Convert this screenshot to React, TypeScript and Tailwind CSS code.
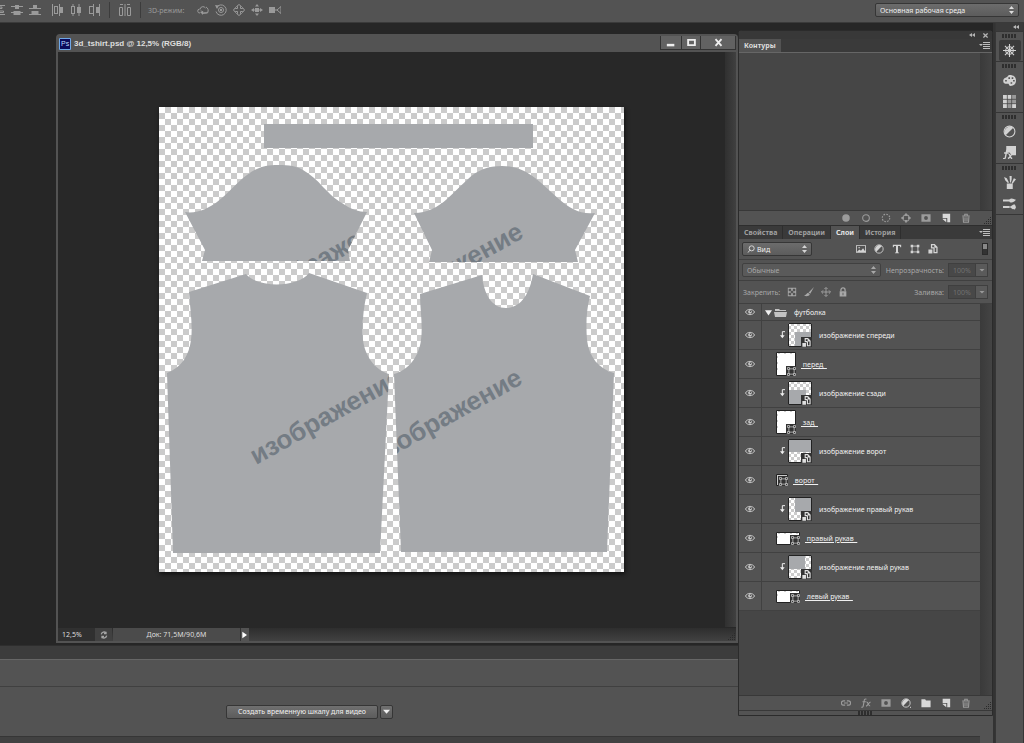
import type { ReactNode } from "react";

type IconProps = { children: ReactNode; className?: string; size?: number };

const Icon = ({ children, className = "", size = 12 }: IconProps) => (
  <svg
    width={size}
    height={size}
    viewBox="0 0 12 12"
    fill="none"
    stroke="currentColor"
    className={`shrink-0 ${className}`}
    aria-hidden="true"
  >
    {children}
  </svg>
);

const solid = { fill: "currentColor", stroke: "none" };

const trash = <path strokeWidth="1.300" d="M1.500 3.500h9M4.500 3V1.500h3V3M2.500 4.500l.5 6.500h6l.5-6.500M4.800 5v5M7.200 5v5" />;
const newSheet = <path {...solid} d="M2 1h9v10H7.500V6H2zM2 7h4.300v4L2 7.500z" />;
const mask = <path {...solid} fillRule="evenodd" d="M.5 1.500h11v9H.5zM6 3.700a2.300 2.300 0 1 0 0 4.600 2.300 2.300 0 0 0 0-4.600z" />;
const halfCircle = (
  <>
    <circle cx="6" cy="6" r="5" />
    <path {...solid} d="M9.500 2.500a5 5 0 0 0-7 7z" />
  </>
);
const frame = (
  <>
    <path d="M2.500 2.500h7v7h-7z" />
    <path {...solid} d="M.8.800h3v3h-3zM8.200.800h3v3h-3zM.8 8.200h3v3h-3zM8.200 8.200h3v3h-3z" />
  </>
);
const smart = <path {...solid} fillRule="evenodd" d="M3.500 0H8l3.500 3.500V11H6.500V5.500h-3zM5 1.500V4h3v5.500h2V4.500H7.500v-3zM.5 6.500h4.800v5H.5z" />;

const alignIcons = [
  <path d="M0 1.500h12M0 10.500h12M3 3h6v1.500H3zM1.500 7h9v1.500h-9z" />,
  <path {...solid} d="M0 2h4V1h4v1h4v1H8v2H4V3H0zM0 8h2.500V7h7v1H12v1H9.500v2h-7V9H0z" />,
  <path {...solid} d="M4 1h4v3h4v1H0V4h4zM2.500 7h7v3H12v1H0v-1h2.500z" />,
];
const distributeIcons = [
  <path {...solid} fillRule="evenodd" d="M0 0h1v12H0zM2 2h4v8H2zM3 3v6h2V3zM7 0h1v3h3v6H8v3H7z" />,
  <path {...solid} fillRule="evenodd" d="M2.500 0h1v2H5v8H3.500v2h-1v-2H1V2h1.500zM2 3v6h2V3zM8.500 0h1v3H11v6H9.500v3h-1V9H7V3h1.500z" />,
  <path {...solid} fillRule="evenodd" d="M5 0h1v12H5v-2H1V2h4zM2 3v6h3V3zM11 0h1v12h-1V9H8V3h3z" />,
];
const modeIcons = [
  <>
    <path d="M3 5.500a3 3 0 0 1 5.500-1.500M3 9a2 2 0 0 1-.5-4M4 6.500c2 2.500 5 2.500 6.500 1.500M9 3c2 1 3 3.500 1.500 6L5 9.500" />
    <path {...solid} d="M3 8l3-1v4z" />
  </>,
  <>
    <path d="M1.500 3.500a5.200 5.200 0 1 1-.5 4" />
    <circle cx="6" cy="6" r="2.500" />
    <path {...solid} d="M0 1l4 .5L2 5zM5 5h2v2H5z" />
  </>,
  <path d="M4.500 4.500V2.500H3.500L6 .5l2.500 2h-1v2h2v-1l2 2.500-2 2.500v-1h-2v2h1L6 11.500l-2.500-2h1v-2h-2v1L.5 6l2-2.500v1z" />,
  <>
    <path {...solid} d="M6 0l2 2.500H4zM6 12l2-2.500H4zM0 6l3-2v4zM12 6L9 4v4z" />
    <path {...solid} d="M4 4h4v4H4z" />
    <path d="M2 6h8" />
  </>,
  <>
    <path {...solid} d="M0 3h6v6H0z" />
    <path d="M12 2.500L8 6l4 3.500zM6 6h2" />
  </>,
];

const Arrows = () => (
  <svg width="5" height="8" viewBox="0 0 5 8" className="pointer-events-none absolute right-1 top-1/2 -translate-y-1/2" aria-hidden="true">
    <path fill="currentColor" d="M0 3L2.500 0 5 3zM0 5h5L2.500 8z" />
  </svg>
);

const Grip = () => (
  <svg width="15" height="4" viewBox="0 0 15 4" className="text-[#2e2e2e]" aria-hidden="true">
    <path stroke="currentColor" strokeDasharray="2 1" strokeWidth="4" d="M0 2h15" />
  </svg>
);

const DoubleArrow = () => (
  <svg width="6" height="4" viewBox="0 0 6 4" aria-hidden="true">
    <path fill="currentColor" d="M3 0v4L0 2zM6 0v4L3 2z" />
  </svg>
);

const PanelMenu = () => (
  <button type="button" aria-label="Меню панели" className="ml-auto mr-0.5 text-[#bdbdbd]">
    <svg width="11" height="7" viewBox="0 0 11 7" aria-hidden="true">
      <path fill="currentColor" d="M0 2h4L2 4zM4 0h7v1H4zM4 2h7v1H4zM4 4h7v1H4zM4 6h7v1H4z" />
    </svg>
  </button>
);

const Corner = () => (
  <svg width="8" height="8" viewBox="0 0 8 8" className="ml-auto self-end text-[#2b2b2b]" aria-hidden="true">
    <path fill="currentColor" d="M6 0h1v1H6zM4 2h1v1H4zM6 2h1v1H6zM2 4h1v1H2zM4 4h1v1H4zM6 4h1v1H6zM0 6h1v1H0zM2 6h1v1H2zM4 6h1v1H4zM6 6h1v1H6z" />
  </svg>
);

type Tool = { name: string; icon: ReactNode; bright?: boolean };

const pathTools: Tool[] = [
  { name: "Заливка контура", icon: <circle {...solid} cx="6" cy="6" r="4.500" /> },
  { name: "Обводка контура", icon: <circle cx="6" cy="6" r="4" strokeWidth="1.300" /> },
  { name: "Контур как область", icon: <circle cx="6" cy="6" r="4.500" strokeWidth="1.300" strokeDasharray="2 1.500" /> },
  { name: "Рабочий контур", icon: <><circle cx="6" cy="6" r="3.800" strokeWidth="1.300" /><path {...solid} d="M4.800.500h2.400v3H4.800zM4.800 8.500h2.400v3H4.800zM.5 4.800h3v2.400h-3zM8.500 4.800h3v2.400h-3z" /></> },
  { name: "Добавить маску", icon: mask },
  { name: "Новый контур", icon: newSheet, bright: true },
  { name: "Удалить контур", icon: trash },
];

const layerTools: Tool[] = [
  { name: "Связать слои", icon: <path strokeWidth="1.400" d="M5 3.500H3a2.500 2.500 0 0 0 0 5h2M7 3.500h2a2.500 2.500 0 0 1 0 5H7M3.500 6h5" /> },
  { name: "Стиль слоя", icon: <path strokeWidth="1.300" d="M6.500 1.500C4.500.5 4 2 3.700 4L2.700 9.500C2.500 11 1.500 11.500.5 10.800M1.800 4.500h4M6.500 5c2-1 1.800 4.500 4.500 4.500M11.500 4.800C9 5.500 8.500 9 6 9.800" /> },
  { name: "Слой-маска", icon: mask },
  { name: "Корректирующий слой", icon: <>{halfCircle}<path {...solid} d="M11 10.500h1V12h-1z" /></>, bright: true },
  { name: "Новая группа", icon: <path {...solid} d="M.5 1.500h4.500l1 1.500h5.500v8H.5z" />, bright: true },
  { name: "Новый слой", icon: newSheet, bright: true },
  { name: "Удалить слой", icon: trash },
];

const ToolRow = ({ tools }: { tools: Tool[] }) => (
  <div className="flex h-[15px] shrink-0 items-center border-t border-[#383838] bg-[#535353] pl-[97px]">
    {tools.map((tool) => (
      <button key={tool.name} type="button" aria-label={tool.name} className="flex w-5 justify-center text-[#9b9b9b]">
        <Icon size={10} className={tool.bright ? "text-[#d8d8d8]" : ""}>{tool.icon}</Icon>
      </button>
    ))}
    <Corner />
  </div>
);

const layers = [
  { name: "изображение спереди", fill: "M7 9h17v15H7z" },
  { name: "перед", w: 20, h: 24 },
  { name: "изображение сзади", fill: "M0 9h18v15H0z" },
  { name: "зад", w: 20, h: 24 },
  { name: "изображение ворот", fill: "M0 0h24v13H0z" },
  { name: "ворот", w: 12, h: 12 },
  { name: "изображение правый рукав", fill: "M7 0h17v15H7z" },
  { name: "правый рукав", w: 24, h: 13 },
  { name: "изображение левый рукав", fill: "M0 0h17v14H0z" },
  { name: "левый рукав", w: 24, h: 13 },
];

const Eye = () => (
  <button type="button" aria-label="Видимость слоя" className="flex w-[23px] shrink-0 items-center justify-center self-stretch border-r border-[#414141] text-[#c6c6c6]">
    <svg width="10" height="8" viewBox="0 0 10 8" aria-hidden="true">
      <path fill="none" stroke="currentColor" d="M.5 4C2 .5 8 .5 9.500 4 8 7.500 2 7.500.5 4z" />
      <circle cx="5" cy="3.800" r="1.900" fill="currentColor" />
      <circle cx="5.500" cy="3.300" r=".7" fill="#444" />
    </svg>
  </button>
);

const SmartThumb = ({ fill }: { fill: string }) => (
  <svg width="24" height="24" viewBox="0 0 24 24" className="shrink-0" aria-hidden="true">
    <path fill="url(#smallChecker)" d="M0 0h24v24H0z" />
    <path fill="#a7a9ac" d={fill} />
    <path fill="none" stroke="#222" d="M.5.5h23v23H.5z" />
    <path fill="#333" d="M13 14h11v10H13z" />
    <g color="#e0e0e0" transform="translate(14 15) scale(.75)">{smart}</g>
  </svg>
);

const ShapeThumb = ({ w, h }: { w: number; h: number }) => (
  <svg width={w} height={h} viewBox={`0 0 ${w} ${h}`} className="shrink-0" aria-hidden="true">
    <path fill={w === 12 ? "#ccc" : "#fff"} stroke="#222" d={`M.5.5h${w - 1}v${h - 1}H.5z`} />
    {w > 12 && <path stroke="#ccc" strokeDasharray="2 4" d={`M2 1.500h${w - 4}M1.500 4v${h - 8}`} />}
    <path fill="#333" d={`M${w - 10} ${h - 10}h10v10h-10z`} />
    <g stroke="#d0d0d0" fill="none" transform={`translate(${w - 9} ${h - 9}) scale(.75)`}>
      <path d="M2.500 2.500h7v7h-7z" />
      <path fill="#333" d="M.7.700h2.600v2.600H.7zM8.700.700h2.600v2.600H8.700zM.7 8.700h2.600v2.600H.7zM8.700 8.700h2.600v2.600H8.700z" />
    </g>
  </svg>
);

const leftSleeve = "M26 105C38 107 50 101 58 95C70 86 78 75 88 68C98 60 108 58 119 58C130 58 138 59 144 63C152 68 158 73 164 80C170 86 177 93 183 96C191 102 200 105 208 105L189 143L191 154H43L46 143z";
const rightSleeve = "M255 106C268 106 279 100 288 92C295 86 301 79 308 73C318 63 329 59 343 59C358 59 369 65 381 75C388 81 394 87 401 93C410 101 422 108 436 106L416 143L419 155H270L273 143z";
const leftBody = "M30 185L87 167C98 181 139 181 150 166L208 186C204 202 203 218 204 233C206 249 216 263 230 267L221 446H14L8 266C23 260 30 248 32 233C34 218 31 202 30 185z";
const rightBody = "M261 187L323 168C325 188 333 201 347 201C362 201 371 186 374 167L431 189C427 204 427 219 428 233C430 250 440 262 455 266L448 445H242L235 267C250 263 260 249 262 233C264 218 261 202 261 187z";

const Canvas = () => (
  <svg width="465" height="465" viewBox="0 0 465 465" className="shrink-0 shadow-[1px_2px_4px_#111]" role="img" aria-label="3d_tshirt">
    <defs>
      <pattern id="checker" width="12" height="12" patternUnits="userSpaceOnUse">
        <path fill="#fff" d="M0 0h12v12H0z" />
        <path fill="#cbcbcb" d="M6 0h6v6H6zM0 6h6v6H0z" />
      </pattern>
      <pattern id="smallChecker" width="6" height="6" patternUnits="userSpaceOnUse">
        <path fill="#fff" d="M0 0h6v6H0z" />
        <path fill="#ccc" d="M3 0h3v3H3zM0 3h3v3H0z" />
      </pattern>
      <clipPath id="leftSleeve"><path d={leftSleeve} /></clipPath>
      <clipPath id="rightSleeve"><path d={rightSleeve} /></clipPath>
      <clipPath id="leftBody"><path d={leftBody} /></clipPath>
      <clipPath id="rightBody"><path d={rightBody} /></clipPath>
    </defs>
    <path fill="url(#checker)" d="M0 0h465v465H0z" />
    <g fill="#a7a9ac">
      <path d="M105 17h269v24H105z" />
      <path d={leftSleeve} />
      <path d={rightSleeve} />
      <path d={leftBody} />
      <path d={rightBody} />
    </g>
    <g className="font-['Liberation_Sans',sans-serif] text-[26px] font-bold" fill="#747c84">
      <g clipPath="url(#leftSleeve)"><text transform="translate(97 198) rotate(-29)">изображение</text></g>
      <g clipPath="url(#rightSleeve)"><text transform="translate(218 212) rotate(-29)">изображение</text></g>
      <g clipPath="url(#leftBody)"><text transform="translate(97 358) rotate(-29)">изображение</text></g>
      <g clipPath="url(#rightBody)"><text transform="translate(217 358) rotate(-29)">изображение</text></g>
    </g>
  </svg>
);

const DocumentWindow = () => (
  <section className="mr-[255px] flex min-h-0 flex-1 flex-col rounded-t-sm border-2 border-[#535353] bg-[#282828]">
    <div className="flex h-4 shrink-0 items-center bg-[#535353] pl-px">
      <svg width="12" height="12" viewBox="0 0 12 12" aria-hidden="true">
        <path fill="#0b0b5c" stroke="#6fa8e8" d="M.5.5h11v11H.5z" />
        <text x="2" y="8" fill="#b9dcff" className="font-['Liberation_Sans',sans-serif] text-[7px]">Ps</text>
      </svg>
      <h1 className="ml-[3px] font-['Liberation_Sans',sans-serif] text-[8px] font-bold text-[#dedede]">3d_tshirt.psd @ 12,5% (RGB/8)</h1>
      <div className="ml-auto flex h-[14px] self-start border border-t-0 border-[#333] bg-[#626262] text-[#eee]">
        <button type="button" aria-label="Свернуть" className="flex w-5 items-center justify-center">
          <Icon size={10}><path {...solid} d="M1 7h9v3H1z" /></Icon>
        </button>
        <button type="button" aria-label="Развернуть" className="flex w-5 items-center justify-center border-x border-[#333]">
          <Icon size={9}><path strokeWidth="2.500" d="M1.500 2.500h9v7h-9z" /></Icon>
        </button>
        <button type="button" aria-label="Закрыть" className="flex w-[34px] items-center justify-center">
          <Icon size={9}><path strokeWidth="2.500" d="M2 1.500l8 9M10 1.500l-8 9" /></Icon>
        </button>
      </div>
    </div>
    <div className="flex min-h-0 flex-1">
      <div className="flex flex-1 items-center justify-center"><Canvas /></div>
      <div className="w-[11px] bg-linear-to-r from-[#303030] to-[#404040]" />
    </div>
    <div className="flex h-[14px] shrink-0 items-stretch border-t border-[#282828] bg-linear-to-b from-[#2e2e2e] to-[#414141] text-[7px] text-[#ddd]">
      <div className="flex w-[37px] items-center bg-[#303030] pl-1">12,5%</div>
      <div className="flex w-[17px] items-center justify-center bg-[#414141] text-[#a5a5a5]">
        <Icon size={8}><path strokeWidth="2" d="M2 5a4 4 0 0 1 7-2M10 7a4 4 0 0 1-7 2M9 1v3H6M3 11V8h3" /></Icon>
      </div>
      <div className="ml-px flex w-[127px] items-center justify-center bg-[#4b4b4b]">Док: 71,5M/90,6M</div>
      <button type="button" aria-label="Сведения о документе" className="flex w-[9px] items-center justify-center border-l border-[#333] bg-[#535353] text-white">
        <Icon size={8}><path {...solid} d="M2 1l7 5-7 5z" /></Icon>
      </button>
      <Corner />
    </div>
  </section>
);

const filters = [
  { name: "Пиксельные слои", icon: <path {...solid} fillRule="evenodd" d="M0 1.500h12v9H0zM1 2.500v7l3-3 2 1.500 2.500-3L11 9V2.500zM3 3.500h1.500V5H3z" /> },
  { name: "Корректирующие слои", icon: halfCircle },
  { name: "Текстовые слои", icon: <path {...solid} d="M1 1h10v3h-1L9.500 2.500h-2.300V10l1.300.5v.5h-5v-.5l1.300-.5V2.500H2.500L2 4H1z" /> },
  { name: "Слои-фигуры", icon: frame },
  { name: "Смарт-объекты", icon: smart },
];

const locks = [
  { name: "Прозрачность", icon: <path {...solid} fillRule="evenodd" d="M1 1h10v10H1zM2 2v3h3V2zM7 2v3h3V2zM4.500 4.500v3h3v-3zM2 7v3h3V7zM7 7v3h3V7z" /> },
  { name: "Пиксели", icon: <path {...solid} d="M12 0L7.500 8 5.500 6.500zM5 7l2 2c-1 2-4 2.500-7 1.500C2.500 10 3 7.500 5 7z" /> },
  { name: "Положение", icon: <path d="M6 1v10M1 6h10M4 2.500l2-2 2 2M4 9.500l2 2 2-2M2.500 4l-2 2 2 2M9.500 4l2 2-2 2" /> },
  { name: "Всё", icon: <><path {...solid} fillRule="evenodd" d="M2 5h8v6.500H2zM5.500 7v3h1V7z" /><path strokeWidth="1.500" d="M3.500 5V3.500a2.500 2.500 0 0 1 5 0V5" /></> },
];

const Percent = ({ id }: { id: string }) => (
  <div className="mr-1 flex h-[14px] items-stretch border border-[#3f3f3f] text-[#717171]">
    <input id={id} defaultValue="100%" disabled className="w-[26px] bg-[#484848] text-center text-[7px]" />
    <button type="button" aria-label="Изменить значение" className="flex w-3 items-center justify-center border-l border-[#3f3f3f] bg-[#5a5a5a] text-[#999]">
      <Icon size={6}><path {...solid} d="M1 4h10l-5 5z" /></Icon>
    </button>
  </div>
);

const tabs = ["Свойства", "Операции", "Слои", "История"];

const Panels = () => (
  <aside className="absolute bottom-[27px] right-0 top-[7px] flex w-[255px] flex-col rounded-t-sm border border-[#2b2b2b] bg-[#535353]">
    <div className="flex h-2 shrink-0 items-center justify-end gap-2 bg-[#383838] pr-1 text-[#b5b5b5]">
      <DoubleArrow />
      <Icon size={5}><path strokeWidth="3" d="M1 1l10 10M11 1L1 11" /></Icon>
    </div>
    <div className="flex h-[14px] shrink-0 items-center border-b border-[#666] bg-[#3a3a3a]">
      <h2 className="flex h-full items-center bg-[#535353] px-[5px] text-[7px] font-bold text-[#dedede]">Контуры</h2>
      <PanelMenu />
    </div>
    <div className="flex h-[157px] shrink-0">
      <div className="flex-1 bg-[#464646]" />
      <div className="w-3 bg-linear-to-r from-[#3a3a3a] to-[#444]" />
    </div>
    <ToolRow tools={pathTools} />
    <div role="tablist" className="flex h-[14px] shrink-0 items-center border-t border-[#2e2e2e] bg-[#3a3a3a] text-[7px] font-bold">
      {tabs.map((tab) => (
        <button
          key={tab}
          type="button"
          role="tab"
          aria-selected={tab === "Слои"}
          className={`h-full border-r border-[#2e2e2e] px-[5px] ${tab === "Слои" ? "bg-[#535353] text-[#e6e6e6]" : "text-[#a0a0a0]"}`}
        >
          {tab}
        </button>
      ))}
      <PanelMenu />
    </div>
    <div className="flex h-[21px] shrink-0 items-center border-b border-[#404040] pl-[3px] text-[#d4d4d4]">
      <div className="relative flex h-[14px] w-[70px] items-center rounded-xs border border-[#363636] bg-linear-to-b from-[#6c6c6c] to-[#5c5c5c]">
        <Icon size={8} className="absolute left-1"><path strokeWidth="1.500" d="M5 7.500L1 11.500" /><circle cx="7" cy="5" r="3.800" strokeWidth="1.500" /></Icon>
        <select aria-label="Фильтр слоёв" className="h-full w-full appearance-none pl-[14px] text-[7px] text-[#f0f0f0]">
          <option>Вид</option>
        </select>
        <Arrows />
      </div>
      <div className="ml-10 flex">
        {filters.map((filter) => (
          <button key={filter.name} type="button" aria-label={filter.name} className="flex w-[18px] justify-center">
            <Icon size={10}>{filter.icon}</Icon>
          </button>
        ))}
      </div>
      <button type="button" aria-label="Включить фильтрацию" className="ml-auto mr-1 h-3 w-[6px] border border-[#2b2b2b] bg-linear-to-b from-[#888] from-50% to-[#333] to-50%" />
    </div>
    <div className="flex h-[21px] shrink-0 items-center border-b border-[#404040] pl-[3px] text-[7px] text-[#a8a8a8]">
      <div className="relative h-[14px] w-[139px] rounded-xs border border-[#404040] bg-[#5a5a5a]">
        <select aria-label="Режим наложения" className="block h-full w-full appearance-none pl-1">
          <option>Обычные</option>
        </select>
        <Arrows />
      </div>
      <label htmlFor="opacity" className="ml-auto mr-1">Непрозрачность:</label>
      <Percent id="opacity" />
    </div>
    <div className="flex h-[23px] shrink-0 items-center border-b border-[#404040] pl-1 text-[7px] text-[#a8a8a8]">
      <span>Закрепить:</span>
      <div className="ml-[3px] flex">
        {locks.map((lock) => (
          <button key={lock.name} type="button" aria-label={lock.name} className="flex w-[17px] justify-center">
            <Icon size={10}>{lock.icon}</Icon>
          </button>
        ))}
      </div>
      <label htmlFor="fill" className="ml-auto mr-1">Заливка:</label>
      <Percent id="fill" />
    </div>
    <div className="flex min-h-0 flex-1">
      <ul className="flex-1 overflow-hidden bg-[#464646] text-[7px] text-[#f0f0f0]">
        <li className="flex h-[17px] items-center border-b border-[#414141] bg-[#535353]">
          <Eye />
          <Icon size={7} className="ml-[3px]"><path {...solid} d="M0 2h12L6 11z" /></Icon>
          <svg width="13" height="9" viewBox="0 0 13 9" className="ml-[2px] text-[#c4c4c4]" aria-hidden="true">
            <path fill="currentColor" d="M1 1h4l1 1h6v1H1zM0 4h13l-1 5H1z" />
          </svg>
          <span className="ml-[7px]">футболка</span>
        </li>
        {layers.map((layer) => (
          <li key={layer.name} className="flex h-[29px] items-center border-b border-[#414141] bg-[#535353]">
            <Eye />
            {layer.fill ? (
              <div className="flex items-center pl-[17px]">
                <Icon size={8} className="mr-px"><path strokeWidth="1.500" d="M9 1H5v8" /><path {...solid} d="M1.500 6.500h7L5 11z" /></Icon>
                <SmartThumb fill={layer.fill} />
                <span className="ml-[7px]">{layer.name}</span>
              </div>
            ) : (
              <div className="flex items-center pl-[14px]">
                <ShapeThumb w={layer.w!} h={layer.h!} />
                <span className="ml-[5px] whitespace-pre underline">{` ${layer.name}  `}</span>
              </div>
            )}
          </li>
        ))}
      </ul>
      <div className="w-3 bg-linear-to-r from-[#3a3a3a] to-[#444]" />
    </div>
    <ToolRow tools={layerTools} />
    <div className="flex h-[5px] shrink-0 items-center justify-center border-t border-[#383838]"><Grip /></div>
  </aside>
);

const dockGroups = [
  [{ name: "Навигатор", icon: <><circle cx="6" cy="6" r="3.500" /><path d="M6 0v12M0 6h12M1.800 1.800l8.400 8.400M10.200 1.800l-8.400 8.400" /></> }],
  [
    { name: "Цвет", icon: <path {...solid} fillRule="evenodd" d="M6 1c4 0 6 2 6 5s-2 5-5 5c-2 0-1-2-2.500-2C3 9 .2 9.500.2 6.500S3 3.500 4 2.500 5 1 6 1zM5 3v1.500h1.500V3zM8 3v1.500h1.500V3zM9.300 5.500V7h1.500V5.500zM7 7.500V9h1.500V7.500zM2 5.500V7h1.500V5.500z" /> },
    { name: "Образцы", icon: <><path fill="#999" stroke="none" d="M0 0h12v12H0z" /><path {...solid} d="M0 0h4v12H0zM4 0h4v4H4zM8 8h4v4H8z" /><path stroke="#444" strokeWidth=".7" d="M4 0v12M8 0v12M0 4h12M0 8h12" /></> },
  ],
  [
    { name: "Коррекция", icon: halfCircle },
    { name: "Стили", icon: <><path {...solid} d="M3 0h9v8.500H8L6 6H3z" /><path strokeWidth="1.300" d="M5 3.500C3.500 3 3.200 5 3 6.500L2.300 10C2 12 1 12 0 11.500M1 6.500h4M5 7.500c2-.5 1 4 3.500 4M8.500 7.500C7 8 6.500 11 4.500 11.500" /></> },
  ],
  [
    { name: "Наборы кистей", icon: <path {...solid} d="M3.500 7h5.500v5H3.500zM1 1l2.500 1L5.500 6l-1 .5L2 4zM6 0h2v3L7.300 6H6.500zM10 2l2 1-3 4-1-.5z" /> },
    { name: "Кисть", icon: <path {...solid} d="M0 2.200h7v2H0zM6 2c2-1.500 4 0 6 .5C10 5 8 5.500 6 4.500zM0 8.200h6v2H0zM6 9c2 0 2-2 5-2l1 2.500-1 2c-3 0-3-1.500-5-2z" /> },
  ],
];

const Dock = () => (
  <nav aria-label="Панели" className="flex w-[29px] shrink-0 flex-col border-x border-[#363636] bg-[#535353]">
    <div className="flex h-2 items-center justify-end bg-[#3a3a3a] pr-1 text-[#bbb]"><DoubleArrow /></div>
    {dockGroups.map((group, i) => (
      <div key={i} className="flex flex-col items-center border-t border-[#363636]">
        <div className="flex h-2 items-center"><Grip /></div>
        {group.map((item) => (
          <button
            key={item.name}
            type="button"
            aria-label={item.name}
            className={`flex h-[21px] w-[22px] items-center justify-center rounded-xs text-[#d2d2d2] ${i === 0 ? "bg-[#3b3b3b]" : ""}`}
          >
            <Icon size={13}>{item.icon}</Icon>
          </button>
        ))}
      </div>
    ))}
    <div className="border-t border-[#363636]" />
  </nav>
);

const OptionsBar = () => (
  <header className="flex h-[23px] shrink-0 items-center overflow-hidden border-b border-[#3a3a3a] bg-[#535353] pb-0.5 pr-[5px] text-[#9a9a9a]">
    <div className="-ml-[10px] flex">
      {alignIcons.map((icon, i) => <span key={i} className="flex w-[18px] justify-center"><Icon>{icon}</Icon></span>)}
    </div>
    <div className="ml-[5px] flex">
      {distributeIcons.map((icon, i) => <span key={i} className="flex w-[18px] justify-center"><Icon>{icon}</Icon></span>)}
    </div>
    <div className="mx-[6px] h-4 w-px bg-[#3c3c3c]" />
    <span className="flex w-[18px] justify-center"><Icon><path d="M1 .5h3M6 0v12M8 .5h3M.5 3.500h3v8h-3zM8.500 3.500h3v8h-3z" /></Icon></span>
    <div className="mx-[6px] h-4 w-px bg-[#3c3c3c]" />
    <span className="ml-px text-[7px]">3D-режим:</span>
    <div className="ml-[10px] flex">
      {modeIcons.map((icon, i) => <span key={i} className="flex w-[18px] justify-center"><Icon>{icon}</Icon></span>)}
    </div>
    <div className="relative ml-auto h-[14px] w-36 rounded-xs border border-[#363636] bg-linear-to-b from-[#6c6c6c] to-[#5c5c5c] text-[#ddd]">
      <select aria-label="Рабочая среда" className="block h-full w-full appearance-none pl-1 text-[7px] text-[#f0f0f0]">
        <option>Основная рабочая среда</option>
      </select>
      <Arrows />
    </div>
  </header>
);

const Timeline = () => (
  <footer className="shrink-0 bg-[#535353] text-[7px] text-[#f0f0f0]">
    <div className="h-[14px] border-t border-[#2e2e2e] bg-[#3c3c3c]" />
    <div className="h-7 border-b border-t border-b-[#404040] border-t-[#666]" />
    <div className="flex h-[49px] items-center gap-[2px] pl-[226px]">
      <button type="button" className="h-[14px] w-[152px] rounded-xs border border-[#363636] bg-linear-to-b from-[#707070] to-[#5c5c5c]">
        Создать временную шкалу для видео
      </button>
      <button type="button" aria-label="Выбрать тип шкалы" className="flex h-[14px] w-[13px] items-center justify-center rounded-xs border border-[#363636] bg-linear-to-b from-[#707070] to-[#5c5c5c]">
        <Icon size={7}><path {...solid} d="M0 3h12L6 10z" /></Icon>
      </button>
    </div>
    <div className="mr-[13px] h-[7px] border-t border-[#363636] bg-[#414141]" />
  </footer>
);

export default function App() {
  return (
    <div className="flex h-screen min-h-[640px] flex-col overflow-hidden bg-[#262626] font-['Noto_Sans',sans-serif] leading-none">
      <OptionsBar />
      <main className="flex min-h-0 flex-1">
        <div className="relative flex min-w-0 flex-1 flex-col border-r-2 border-[#333]">
          <div className="flex min-h-0 flex-1 flex-col pb-[2px] pl-14 pt-[11px]">
            <DocumentWindow />
          </div>
          <Timeline />
          <Panels />
        </div>
        <Dock />
      </main>
    </div>
  );
}
